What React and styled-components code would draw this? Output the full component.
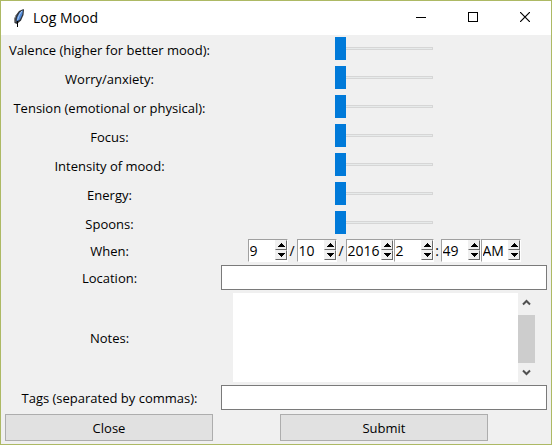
import React from "react";
import styled, { createGlobalStyle } from "styled-components";

const GlobalStyle = createGlobalStyle`
  * { box-sizing: border-box; }
  body { margin: 0; background: #f0f0f0; }
  body, input, textarea, button {
    font-family: "Open Sans", "Segoe UI", "Noto Sans", sans-serif;
    font-size: 13px;
    line-height: 18px;
    color: #000;
  }
`;

const Window = styled.div`
  display: flex;
  flex-direction: column;
  min-height: 100vh;
  border: 1px solid #adb964;
  background: #f0f0f0;
`;

const TitleBar = styled.header`
  display: flex;
  align-items: center;
  height: 34px;
  padding-left: 12px;
  background: #fff;
`;

const Title = styled.h1`
  flex: 1;
  margin: 0 0 0 7px;
  font-size: 14px;
  font-weight: 400;
`;

const WindowButton = styled.button`
  display: grid;
  place-items: center;
  width: 52px;
  height: 34px;
  padding: 0 0 2px;
  border: 0;
  background: transparent;
`;

const Form = styled.form`
  display: grid;
  grid-template-columns: minmax(0, 217fr) minmax(0, 332fr);
  align-items: center;
  padding-right: 1px;
`;

const Label = styled.label`
  text-align: center;
  white-space: nowrap;
`;

const Cell = styled.div`
  display: flex;
  align-items: center;
  justify-content: center;
  height: ${(p) => p.$height}px;
  padding: 0 3px;
`;

const SliderCell = styled(Cell)`
  align-items: flex-start;
  padding-top: 2px;
`;

const LeadingCell = styled(Cell)`
  padding: 0 5px 0 4px;
`;

const Slider = styled.input`
  appearance: none;
  width: 98px;
  height: 23px;
  margin: 0;
  background: transparent;

  &::-webkit-slider-runnable-track {
    height: 3px;
    border: 1px solid #d6d6d6;
    background: #e7eaea;
  }
  &::-webkit-slider-thumb {
    appearance: none;
    width: 11px;
    height: 23px;
    margin: -11px 0 0 -1px;
    background: #007ad9;
  }
`;

const SpinBox = styled.div`
  display: flex;
  width: ${(p) => (p.$wide ? 48 : 40)}px;
  height: 23px;
  border: 1px solid;
  border-color: #a0a0a0 #fff #fff #a0a0a0;
  background: #fff;
`;

const SpinInput = styled.input`
  flex: 1;
  min-width: 0;
  padding: 0 0 0 1px;
  border: 0;
  outline: 0;
  background: transparent;
  font-size: 14px;
`;

const SpinArrows = styled.div`
  display: flex;
  flex-direction: column;
  width: 12px;
  height: 20px;
`;

const SpinArrow = styled.button`
  display: grid;
  place-items: center;
  flex: 1;
  padding: 0;
  border: 1px solid;
  border-color: #f0f0f0 #696969 #696969 #f0f0f0;
  background: #f0f0f0;
`;

const Separator = styled.span`
  width: ${(p) => p.$width}px;
  text-align: center;
  font-size: 14px;
`;

const TextField = styled.input`
  width: 100%;
  height: 25px;
  padding: 0 4px;
  border: 1px solid #7a7a7a;
  border-radius: 0;
  background: #fff;
`;

const NotesBox = styled.div`
  display: flex;
  flex: 1;
  height: 89px;
  margin: 0 12px;
`;

const NotesArea = styled.textarea`
  flex: 1;
  min-width: 0;
  padding: 2px;
  border: 0;
  resize: none;
  overflow: hidden;
  background: #fff;
`;

const ScrollBar = styled.div`
  display: flex;
  flex-direction: column;
  width: 17px;
`;

const ScrollArrow = styled.button`
  display: grid;
  place-items: center;
  height: 19px;
  padding: 0;
  border: 0;
  background: transparent;
`;

const ScrollThumb = styled.div`
  flex: 1;
  margin-top: 3px;
  background: #cdcdcd;
`;

const PushButton = styled.button`
  width: 208px;
  height: 27px;
  padding: 0;
  border: 1px solid #adadad;
  background: #e1e1e1;
`;

const sliders = [
  ["valence", "Valence (higher for better mood):"],
  ["worry", "Worry/anxiety:"],
  ["tension", "Tension (emotional or physical):"],
  ["focus", "Focus:"],
  ["intensity", "Intensity of mood:"],
  ["energy", "Energy:"],
  ["spoons", "Spoons:"],
];

function FeatherIcon() {
  return (
    <svg width="13" height="18" viewBox="0 0 13 18" aria-hidden="true">
      <path d="M10.5 0 L6 2 L3 6 L1.2 10 L1.5 14 L4 15 L8 11.5 L10.5 6 L11 1 Z" fill="#30343a" />
      <path d="M10 1.2 L6.5 3.5 L4 8.5 L3.5 12.5 L7 10.5 L9.3 5.5 Z" fill="#4f88d8" />
      <path d="M8.8 2 L6.3 6 L4.5 11" stroke="#a9c8f0" fill="none" />
      <path d="M3 6 L1.6 10 L2 13" stroke="#8b8b8b" fill="none" />
      <path d="M4.5 12 L4.5 18" stroke="#000" fill="none" />
    </svg>
  );
}

function Spin({ label, value, wide }) {
  return (
    <SpinBox $wide={wide}>
      <SpinInput aria-label={label} defaultValue={value} />
      <SpinArrows>
        <SpinArrow type="button" aria-label={`${label} up`}>
          <svg width="8" height="4" shapeRendering="crispEdges">
            <path d="M4 0h1v1h1v1h1v1h1v1H1V3h1V2h1V1h1z" />
          </svg>
        </SpinArrow>
        <SpinArrow type="button" aria-label={`${label} down`}>
          <svg width="8" height="4" shapeRendering="crispEdges">
            <path d="M1 0h7v1H7v1H6v1H5v1H4V3H3V2H2V1H1z" />
          </svg>
        </SpinArrow>
      </SpinArrows>
    </SpinBox>
  );
}

export default function App() {
  return (
    <>
      <GlobalStyle />
      <Window>
        <TitleBar>
          <FeatherIcon />
          <Title>Log Mood</Title>
          <WindowButton type="button" aria-label="Minimize">
            <svg width="10" height="10" shapeRendering="crispEdges">
              <path d="M0 5h10v1H0z" />
            </svg>
          </WindowButton>
          <WindowButton type="button" aria-label="Maximize">
            <svg width="10" height="10" shapeRendering="crispEdges">
              <path d="M0.5 0.5h9v9h-9z" fill="none" stroke="#000" />
            </svg>
          </WindowButton>
          <WindowButton type="button" aria-label="Close window">
            <svg width="10" height="10">
              <path d="M0 0L10 10M10 0L0 10" stroke="#000" strokeWidth="1.2" />
            </svg>
          </WindowButton>
        </TitleBar>
        <Form onSubmit={(e) => e.preventDefault()}>
          {sliders.map(([id, text]) => (
            <React.Fragment key={id}>
              <Label htmlFor={id}>{text}</Label>
              <SliderCell $height={29}>
                <Slider id={id} type="range" min="0" max="10" defaultValue="0" />
              </SliderCell>
            </React.Fragment>
          ))}
          <Label as="span">When:</Label>
          <Cell $height={25}>
            <Spin label="Month" value="9" />
            <Separator $width={9}>/</Separator>
            <Spin label="Day" value="10" />
            <Separator $width={9}>/</Separator>
            <Spin label="Year" value="2016" wide />
            <Spin label="Hour" value="2" />
            <Separator $width={7}>:</Separator>
            <Spin label="Minute" value="49" />
            <Spin label="AM or PM" value="AM" />
          </Cell>
          <Label htmlFor="location">Location:</Label>
          <Cell $height={29}>
            <TextField id="location" />
          </Cell>
          <Label htmlFor="notes">Notes:</Label>
          <Cell $height={91}>
            <NotesBox>
              <NotesArea id="notes" />
              <ScrollBar>
                <ScrollArrow type="button" aria-label="Scroll up">
                  <svg width="9" height="7">
                    <path d="M1 5.5L4.5 2L8 5.5" fill="none" stroke="#505050" strokeWidth="2" />
                  </svg>
                </ScrollArrow>
                <ScrollThumb />
                <ScrollArrow type="button" aria-label="Scroll down">
                  <svg width="9" height="7">
                    <path d="M1 1.5L4.5 5L8 1.5" fill="none" stroke="#505050" strokeWidth="2" />
                  </svg>
                </ScrollArrow>
              </ScrollBar>
            </NotesBox>
          </Cell>
          <Label htmlFor="tags">Tags (separated by commas):</Label>
          <Cell $height={29}>
            <TextField id="tags" />
          </Cell>
          <LeadingCell $height={31}>
            <PushButton type="button">Close</PushButton>
          </LeadingCell>
          <Cell $height={31}>
            <PushButton type="submit">Submit</PushButton>
          </Cell>
        </Form>
      </Window>
    </>
  );
}
